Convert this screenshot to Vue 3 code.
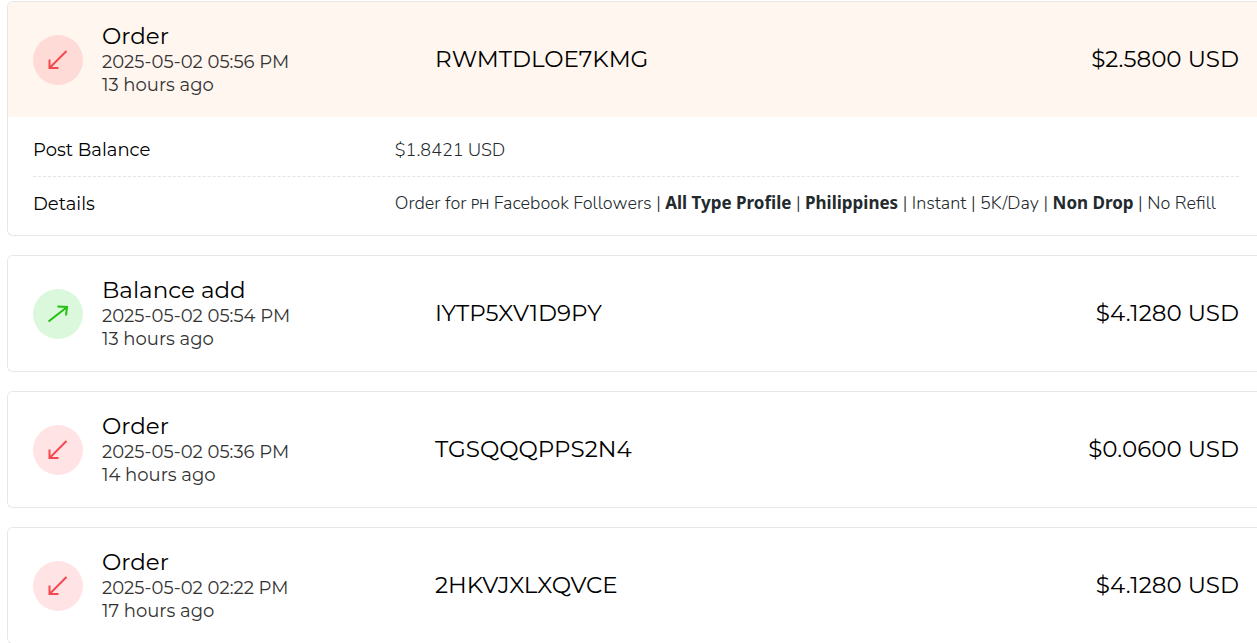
<script setup>
import { ref } from 'vue'

const transactions = ref([
  {
    id: 'RWMTDLOE7KMG', type: 'Order', date: '2025-05-02 05:56 PM', ago: '13 hours ago',
    amount: '$2.5800 USD', credit: false, open: true, balance: '$1.8421 USD',
    details: [
      { text: 'Order for ' }, { text: 'PH', kind: 'flag' }, { text: ' Facebook Followers | ' },
      { text: 'All Type Profile', kind: 'strong' }, { text: ' | ' },
      { text: 'Philippines', kind: 'strong' }, { text: ' | Instant | 5K/Day | ' },
      { text: 'Non Drop', kind: 'strong' }, { text: ' | No Refill' },
    ],
  },
  { id: 'IYTP5XV1D9PY', type: 'Balance add', date: '2025-05-02 05:54 PM', ago: '13 hours ago', amount: '$4.1280 USD', credit: true, open: false },
  { id: 'TGSQQQPPS2N4', type: 'Order', date: '2025-05-02 05:36 PM', ago: '14 hours ago', amount: '$0.0600 USD', credit: false, open: false },
  { id: '2HKVJXLXQVCE', type: 'Order', date: '2025-05-02 02:22 PM', ago: '17 hours ago', amount: '$4.1280 USD', credit: false, open: false },
])

function toggle(item) {
  if (item.details) item.open = !item.open
}
</script>

<template>
  <main class="list">
    <article v-for="item in transactions" :key="item.id" class="card">
      <button type="button" class="head" :class="{ active: item.open }" :aria-expanded="item.open" @click="toggle(item)">
        <span class="summary">
          <span class="badge" :class="item.credit ? 'credit' : 'debit'">
            <svg v-if="item.credit" width="24" height="24" viewBox="0 0 24 24" aria-hidden="true">
              <path d="M2.5 19.5 20.5 5.5M11.5 4.5 21 5 20 13.5" />
            </svg>
            <svg v-else width="24" height="24" viewBox="0 0 24 24" aria-hidden="true">
              <path d="M20.5 3 3.5 20M3.5 11.5V20H12.5" />
            </svg>
          </span>
          <span class="about">
            <span class="title">{{ item.type }}</span>
            <span class="time">{{ item.date }}</span>
            <span class="time">{{ item.ago }}</span>
          </span>
        </span>
        <span class="code">{{ item.id }}</span>
        <span class="amount">{{ item.amount }}</span>
      </button>
      <dl v-if="item.open" class="body">
        <div class="row">
          <dt>Post Balance</dt>
          <dd>{{ item.balance }}</dd>
        </div>
        <div class="row">
          <dt>Details</dt>
          <dd><span v-for="(part, i) in item.details" :key="i" :class="part.kind">{{ part.text }}</span></dd>
        </div>
      </dl>
    </article>
  </main>
</template>

<style>
body {
  background: #fff;
  overflow: hidden;
}
</style>

<style scoped>
.list {
  display: flex;
  flex-direction: column;
  gap: 19px;
  padding: 1px 0 0 7px;
  font-family: Montserrat, Inter, sans-serif;
  font-weight: 400;
  color: #000;
}
.card {
  border: 1px solid #e7e7e7;
  border-right: 0;
  border-radius: 6px 0 0 6px;
  overflow: hidden;
}
.head {
  display: grid;
  grid-template-columns: 1fr 1fr 1fr;
  align-items: center;
  width: 100%;
  padding: 20px 18px 20px 25px;
  border: 0;
  background: #fff;
  color: inherit;
  font: inherit;
  text-align: left;
  cursor: pointer;
}
.head.active {
  background: #fff6ef;
}
.summary {
  display: flex;
  align-items: center;
  gap: 19px;
}
.badge {
  display: flex;
  align-items: center;
  justify-content: center;
  width: 50px;
  height: 50px;
  border-radius: 50%;
}
.badge path {
  fill: none;
  stroke: currentColor;
  stroke-width: 2;
}
.debit {
  background: rgba(255, 70, 80, 0.15);
  color: #f4484e;
}
.credit {
  background: #dcf8dc;
  color: #20c10f;
}
.about {
  display: flex;
  flex-direction: column;
}
.title {
  font-size: 23px;
  line-height: 29px;
}
.time {
  font-size: 18px;
  line-height: 23px;
  color: #333;
}
.code,
.amount {
  font-size: 23px;
  line-height: 29px;
}
.amount {
  text-align: right;
}
.body {
  margin: 0;
  padding: 7px 18px 4px 25px;
}
.row {
  display: grid;
  grid-template-columns: 30% 1fr;
  align-items: center;
  padding: 13px 0;
}
.row + .row {
  border-top: 1px dashed #e4e4e4;
}
dt {
  font-size: 18px;
  line-height: 26px;
}
dd {
  margin: 0;
  font-family: Nunito, "Open Sans", sans-serif;
  font-size: 18px;
  font-weight: 300;
  line-height: 26px;
  color: #222a2e;
}
.strong {
  font-family: "Noto Sans", sans-serif;
  font-size: 17px;
  font-weight: 700;
}
.flag {
  font-size: 13px;
  font-weight: 400;
}
</style>
